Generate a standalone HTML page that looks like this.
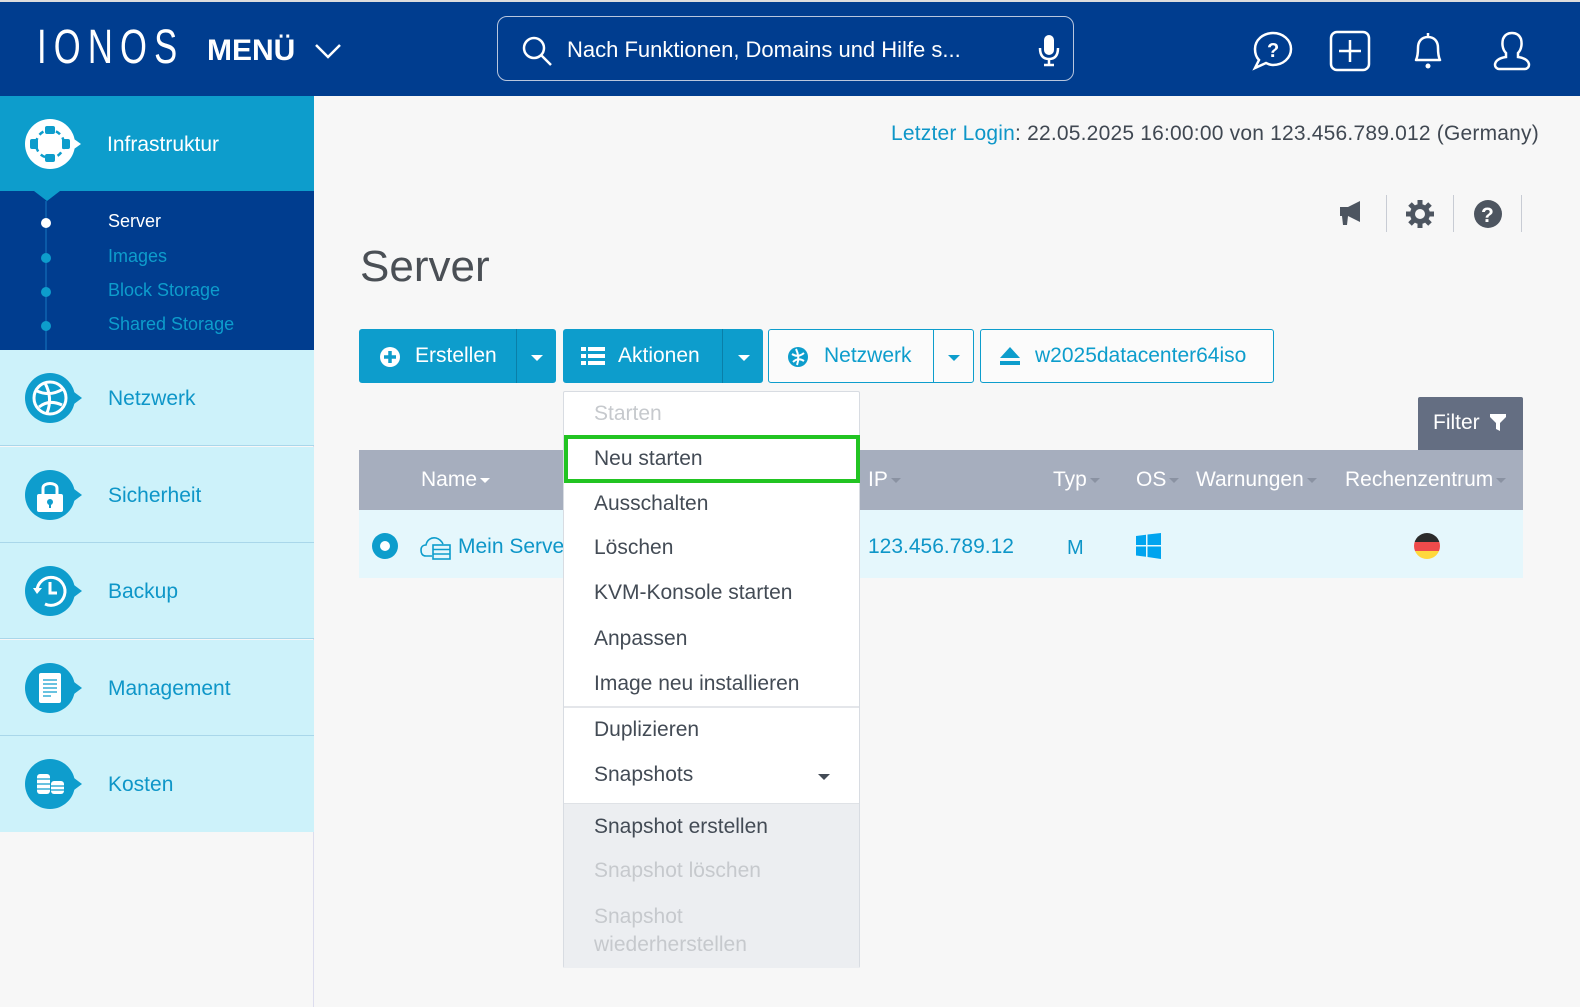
<!DOCTYPE html>
<html><head><meta charset="utf-8"><style>
*{margin:0;padding:0;box-sizing:border-box}
body{width:1580px;height:1007px;position:relative;overflow:hidden;background:#f7f7f7;font-family:"Liberation Sans",sans-serif;color:#404852}
.a{position:absolute}
.hdr{left:0;top:0;width:1580px;height:96px;background:#003d8f;border-top:2px solid #ddd}
.t{position:absolute;white-space:nowrap}
.side{left:0;top:96px;width:314px;height:911px;background:#f7f7f7;border-right:1px solid #dde}
.it{position:absolute;left:0;width:314px;height:96px;background:#cdf2fa;border-bottom:1px solid #a9d7ea}
.it .t{left:108px;top:37px;font-size:21px;color:#0e96c8}
.ic{position:absolute;left:25px;top:23px;width:50px;height:50px;border-radius:50%;background:#0e9dcd}
.ic:after{content:"";position:absolute;right:-7px;top:19px;border-left:8px solid #0e9dcd;border-top:6px solid transparent;border-bottom:6px solid transparent}
.btn{position:absolute;top:329px;height:54px;border-radius:3px;font-size:21px}
.blue{background:#0d9dcc;color:#fff}
.wht{background:#fbfbfb;border:1px solid #0d9dcc;color:#0d9dcc}
.car{position:absolute;width:0;height:0;border-left:6px solid transparent;border-right:6px solid transparent;border-top:6px solid}
.dd{left:563px;top:391px;width:297px;height:577px;background:#fff;border:1px solid #d8dce2;border-radius:2px}
.di{position:absolute;left:30px;font-size:21px;color:#434b55}
.th{font-size:21px;color:#fff;top:468px}
.sc{display:inline-block;margin-left:3px;vertical-align:middle;border-left:5px solid transparent;border-right:5px solid transparent;border-top:5px solid #8a92a2}
</style></head><body>
<div class="a hdr">
 <div class="t" style="left:37px;top:22px;font-size:48px;line-height:48px;color:#fff;letter-spacing:10px;transform:scaleX(0.72);transform-origin:left">IONOS</div>
 <div class="t" style="left:207px;top:32px;font-size:30px;color:#fff;font-weight:bold">MENÜ</div>
 <svg class="a" style="left:314px;top:40px" width="28" height="18"><path d="M2 3 L14 15 L26 3" stroke="#fff" stroke-width="2.5" fill="none"/></svg>
 <div class="a" style="left:497px;top:14px;width:577px;height:65px;border:1.5px solid #b8c6de;border-radius:10px"></div>
 <svg class="a" style="left:520px;top:32px" width="34" height="34"><circle cx="14" cy="14" r="10" stroke="#fff" stroke-width="2.5" fill="none"/><path d="M21 21 L31 31" stroke="#fff" stroke-width="2.5"/></svg>
 <div class="t" style="left:567px;top:35px;font-size:22px;color:#fff">Nach Funktionen, Domains und Hilfe s...</div>
 <svg class="a" style="left:1037px;top:32px" width="24" height="34"><rect x="7" y="1" width="10" height="20" rx="5" fill="#fff"/><path d="M3 14 Q3 25 12 25 Q21 25 21 14 M12 25 V31 M7 31 H17" stroke="#fff" stroke-width="2.5" fill="none"/></svg>
 <svg class="a" style="left:1252px;top:28px" width="44" height="44"><path d="M21 3 C31 3 39 10 39 19 C39 28 31 35 21 35 C18 35 16 34 14 33 L3 38 L7 30 C4 27 3 23 3 19 C3 10 11 3 21 3 Z" stroke="#fff" stroke-width="2.5" fill="none"/><text x="15" y="27" font-size="20" font-weight="bold" fill="#fff" font-family="Liberation Sans">?</text></svg>
 <svg class="a" style="left:1329px;top:28px" width="44" height="44"><rect x="2" y="2" width="38" height="38" rx="6" stroke="#fff" stroke-width="2.5" fill="none"/><path d="M21 10 V32 M10 21 H32" stroke="#fff" stroke-width="2.5"/></svg>
 <svg class="a" style="left:1408px;top:28px" width="40" height="42"><path d="M20 3 V6 M8 30 C10 26 10 22 10 18 C10 11 14 7 20 7 C26 7 30 11 30 18 C30 22 30 26 32 30 Z" stroke="#fff" stroke-width="2.5" fill="none" stroke-linejoin="round"/><circle cx="20" cy="36" r="2.5" fill="#fff"/></svg>
 <svg class="a" style="left:1492px;top:28px" width="40" height="42"><path d="M14 23 C10 19 10 13 11 9 C13 4 17 3 20 3 C23 3 27 4 29 9 C30 13 30 19 26 23 L26 27 C33 28 37 31 37 35 C37 37 35 39 33 39 H7 C5 39 3 37 3 35 C3 31 7 28 14 27 Z" stroke="#fff" stroke-width="2.5" fill="none"/></svg>
</div>

<div class="a side"></div>
<div class="a" style="left:0;top:96px;width:314px;height:95px;background:#0d9dcc">
 <svg class="a" style="left:24px;top:22px" width="60" height="52"><circle cx="26" cy="26" r="25" fill="#fff"/><path d="M50 21 L57 26 L50 31Z" fill="#fff"/><circle cx="26" cy="26" r="14" stroke="#0d9dcc" stroke-width="2.5" fill="none" stroke-dasharray="5 4"/><rect x="21" y="8" width="10" height="8" rx="2" fill="#0d9dcc"/><rect x="21" y="36" width="10" height="8" rx="2" fill="#0d9dcc"/><rect x="6" y="21" width="8" height="10" rx="2" fill="#0d9dcc"/><rect x="38" y="21" width="8" height="10" rx="2" fill="#0d9dcc"/></svg>
 <div class="t" style="left:107px;top:37px;font-size:21px;color:#fff">Infrastruktur</div>
</div>
<div class="a" style="left:0;top:191px;width:314px;height:159px;background:#003d8f">
 <div class="a" style="left:34px;top:0;border-left:13px solid transparent;border-right:13px solid transparent;border-top:10px solid #0d9dcc"></div>
 <div class="a" style="left:45px;top:10px;width:2px;height:149px;background:#0b5aa8"></div>
 <div class="a" style="left:41px;top:27px;width:10px;height:10px;border-radius:50%;background:#fff"></div>
 <div class="a" style="left:41px;top:62px;width:10px;height:10px;border-radius:50%;background:#0d9dcc"></div>
 <div class="a" style="left:41px;top:96px;width:10px;height:10px;border-radius:50%;background:#0d9dcc"></div>
 <div class="a" style="left:41px;top:130px;width:10px;height:10px;border-radius:50%;background:#0d9dcc"></div>
 <div class="t" style="left:108px;top:20px;font-size:18px;color:#fff">Server</div>
 <div class="t" style="left:108px;top:55px;font-size:18px;color:#0d9dcc">Images</div>
 <div class="t" style="left:108px;top:89px;font-size:18px;color:#0d9dcc">Block Storage</div>
 <div class="t" style="left:108px;top:123px;font-size:18px;color:#0d9dcc">Shared Storage</div>
</div>
<div class="it" style="top:350px"><div class="ic"><svg width="50" height="50"><circle cx="25" cy="25" r="16" fill="none" stroke="#fff" stroke-width="3"/><path d="M12 18 Q25 24 38 16 M14 34 Q24 26 37 32 M20 10 Q28 25 22 40" stroke="#fff" stroke-width="3" fill="none"/></svg></div><div class="t">Netzwerk</div></div>
<div class="it" style="top:447px"><div class="ic"><svg width="50" height="50"><path d="M18 24 V18 C18 12 32 12 32 18 V24" stroke="#fff" stroke-width="3" fill="none"/><rect x="12" y="24" width="26" height="18" rx="2" fill="#fff"/><circle cx="25" cy="32" r="3" fill="#0e9dcd"/><rect x="24" y="32" width="2" height="6" fill="#0e9dcd"/></svg></div><div class="t">Sicherheit</div></div>
<div class="it" style="top:543px"><div class="ic"><svg width="50" height="50"><path d="M12 25 A14 14 0 1 1 20 38" stroke="#fff" stroke-width="3" fill="none"/><path d="M8 22 L12 28 L17 22Z" fill="#fff"/><path d="M25 16 V27 H32" stroke="#fff" stroke-width="3" fill="none"/></svg></div><div class="t">Backup</div></div>
<div class="it" style="top:640px"><div class="ic"><svg width="50" height="50"><rect x="14" y="10" width="22" height="30" rx="2" fill="#fff"/><path d="M18 17 H32 M18 21 H32 M18 25 H32 M18 29 H32 M18 33 H26" stroke="#0e9dcd" stroke-width="1.3"/></svg></div><div class="t">Management</div></div>
<div class="it" style="top:736px;height:96px;border-bottom:none"><div class="ic"><svg width="50" height="50"><rect x="12" y="15" width="13" height="20" rx="3" fill="#fff"/><rect x="26" y="22" width="13" height="13" rx="3" fill="#fff"/><path d="M12 20 H25 M12 25 H25 M12 30 H25 M26 27 H39 M26 31 H39" stroke="#0e9dcd" stroke-width="1.3"/></svg></div><div class="t">Kosten</div></div>

<div class="t" style="left:891px;top:122px;font-size:21px;color:#404852;letter-spacing:0.2px"><span style="color:#0e96c8">Letzter Login</span>: 22.05.2025 16:00:00 von 123.456.789.012 (Germany)</div>
<svg class="a" style="left:1336px;top:198px" width="36" height="32"><path d="M4 9 H12 L24 3 V24 L12 18 L11 27 H7 L6 18 H4 Z" fill="#4d5560"/></svg>
<div class="a" style="left:1386px;top:195px;width:1px;height:37px;background:#c8ccd4"></div>
<svg class="a" style="left:1403px;top:198px" width="34" height="32"><circle cx="17" cy="16" r="10" fill="#4d5560"/><g stroke="#4d5560" stroke-width="5"><path d="M17 2 V30 M3 16 H31 M7 6 L27 26 M27 6 L7 26"/></g><circle cx="17" cy="16" r="5" fill="#f7f7f7"/></svg>
<div class="a" style="left:1453px;top:195px;width:1px;height:37px;background:#c8ccd4"></div>
<svg class="a" style="left:1472px;top:199px" width="32" height="32"><circle cx="16" cy="15" r="14" fill="#4d5560"/><text x="9" y="23" font-size="21" font-weight="bold" fill="#fff" font-family="Liberation Sans">?</text></svg>
<div class="a" style="left:1521px;top:195px;width:1px;height:37px;background:#c8ccd4"></div>

<div class="t" style="left:360px;top:242px;font-size:44px;color:#4a4f55">Server</div>

<div class="btn blue" style="left:359px;width:197px"><svg class="a" style="left:20px;top:17px" width="22" height="22"><circle cx="11" cy="11" r="10" fill="#fff"/><path d="M11 5 V17 M5 11 H17" stroke="#0d9dcc" stroke-width="3.5"/></svg><div class="t" style="left:56px;top:15px">Erstellen</div><div class="a" style="left:157px;top:0;width:1px;height:54px;background:#0a7fa8"></div><div class="car" style="left:172px;top:26px;color:#fff"></div></div>
<div class="btn blue" style="left:563px;width:200px"><svg class="a" style="left:18px;top:17px" width="24" height="20"><g fill="#fff"><rect x="0" y="1" width="5" height="4"/><rect x="7" y="1" width="17" height="4"/><rect x="0" y="8" width="5" height="4"/><rect x="7" y="8" width="17" height="4"/><rect x="0" y="15" width="5" height="4"/><rect x="7" y="15" width="17" height="4"/></g></svg><div class="t" style="left:55px;top:15px">Aktionen</div><div class="a" style="left:159px;top:0;width:1px;height:54px;background:#0a7fa8"></div><div class="car" style="left:175px;top:26px;color:#fff"></div></div>
<div class="btn wht" style="left:768px;width:206px"><svg class="a" style="left:18px;top:16px" width="24" height="22"><circle cx="11" cy="11" r="10" fill="#0d9dcc"/><path d="M5 8 Q11 12 17 7 M6 16 Q11 11 17 15 M9 3 Q13 11 10 19" stroke="#fff" stroke-width="2" fill="none"/></svg><div class="t" style="left:55px;top:14px">Netzwerk</div><div class="a" style="left:164px;top:0;width:1px;height:52px;background:#0d9dcc"></div><div class="car" style="left:179px;top:25px;color:#0d9dcc"></div></div>
<div class="btn wht" style="left:980px;width:294px"><svg class="a" style="left:18px;top:16px" width="22" height="20"><path d="M11 1 L21 12 H1 Z" fill="#0d9dcc"/><rect x="1" y="15" width="20" height="4" fill="#0d9dcc"/></svg><div class="t" style="left:54px;top:14px">w2025datacenter64iso</div></div>

<div class="a" style="left:1418px;top:397px;width:105px;height:53px;background:#646e82;border-radius:2px 2px 0 0"><div class="t" style="left:15px;top:14px;font-size:21px;color:#fff">Filter</div><svg class="a" style="left:72px;top:17px" width="16" height="18"><path d="M0 0 H16 V3 L10 9 V17 L6 15 V9 L0 3 Z" fill="#fff"/></svg></div>
<div class="a" style="left:359px;top:450px;width:1164px;height:60px;background:#a6aebe"></div>
<div class="a" style="left:359px;top:510px;width:1164px;height:68px;background:#e5f7fc"></div>
<div class="t th" style="left:421px">Name<span class="sc" style="border-top-color:#fff"></span></div>
<div class="t th" style="left:868px">IP<span class="sc"></span></div>
<div class="t th" style="left:1053px">Typ<span class="sc"></span></div>
<div class="t th" style="left:1136px">OS<span class="sc"></span></div>
<div class="t th" style="left:1196px">Warnungen<span class="sc"></span></div>
<div class="t th" style="left:1345px">Rechenzentrum<span class="sc"></span></div>
<div class="a" style="left:372px;top:533px;width:26px;height:26px;border-radius:50%;background:#0d9dcc"><div class="a" style="left:8px;top:8px;width:10px;height:10px;border-radius:50%;background:#fff"></div></div>
<svg class="a" style="left:420px;top:534px" width="32" height="26"><path d="M12 22 H6 C2 22 1 19 1 16 C1 12 4 11 6 11 C7 6 11 3 16 4 C20 5 22 8 23 10" stroke="#0d9dcc" stroke-width="1.6" fill="none"/><rect x="13" y="11" width="17" height="14" stroke="#0d9dcc" stroke-width="1.6" fill="none"/><path d="M13 15.5 H30 M13 20 H30" stroke="#0d9dcc" stroke-width="1.4"/></svg>
<div class="t" style="left:458px;top:535px;font-size:21px;color:#0e96c8">Mein Serve</div>
<div class="t" style="left:868px;top:535px;font-size:21px;color:#0e96c8">123.456.789.12</div>
<div class="t" style="left:1067px;top:537px;font-size:20px;color:#0e96c8">M</div>
<svg class="a" style="left:1136px;top:533px" width="26" height="26"><path d="M0 3 L10 1.7 V12 H0 Z M11.5 1.5 L25 0 V12 H11.5 Z M0 13.5 H10 V23.8 L0 22.5 Z M11.5 13.5 H25 V26 L11.5 24 Z" fill="#00a4ef"/></svg>
<svg class="a" style="left:1413px;top:532px" width="28" height="28"><defs><clipPath id="c"><circle cx="14" cy="14" r="13"/></clipPath></defs><g clip-path="url(#c)"><rect width="28" height="10" fill="#2b2b2b"/><rect y="10" width="28" height="9" fill="#ee4b4b"/><rect y="19" width="28" height="9" fill="#ffd83c"/></g></svg>

<div class="a dd">
 <div class="di" style="top:10px;color:#c6c9cd">Starten</div>
 <div class="a" style="left:0;top:43px;width:296px;height:48px;border:4px solid #22c422"></div>
 <div class="di" style="top:55px">Neu starten</div>
 <div class="di" style="top:100px">Ausschalten</div>
 <div class="di" style="top:144px">Löschen</div>
 <div class="di" style="top:189px">KVM-Konsole starten</div>
 <div class="di" style="top:235px">Anpassen</div>
 <div class="di" style="top:280px">Image neu installieren</div>
 <div class="a" style="left:0;top:314px;width:295px;height:2px;background:#e4e6ea"></div>
 <div class="di" style="top:326px">Duplizieren</div>
 <div class="di" style="top:371px">Snapshots</div>
 <div class="car" style="left:254px;top:382px;color:#434b55"></div>
 <div class="a" style="left:0;top:411px;width:295px;height:165px;background:#eceef1;border-top:1px solid #dfe2e6"></div>
 <div class="di" style="top:423px">Snapshot erstellen</div>
 <div class="di" style="top:467px;color:#c6c9cd">Snapshot löschen</div>
 <div class="di" style="top:511px;color:#c6c9cd;line-height:28px">Snapshot<br>wiederherstellen</div>
</div>
</body></html>
